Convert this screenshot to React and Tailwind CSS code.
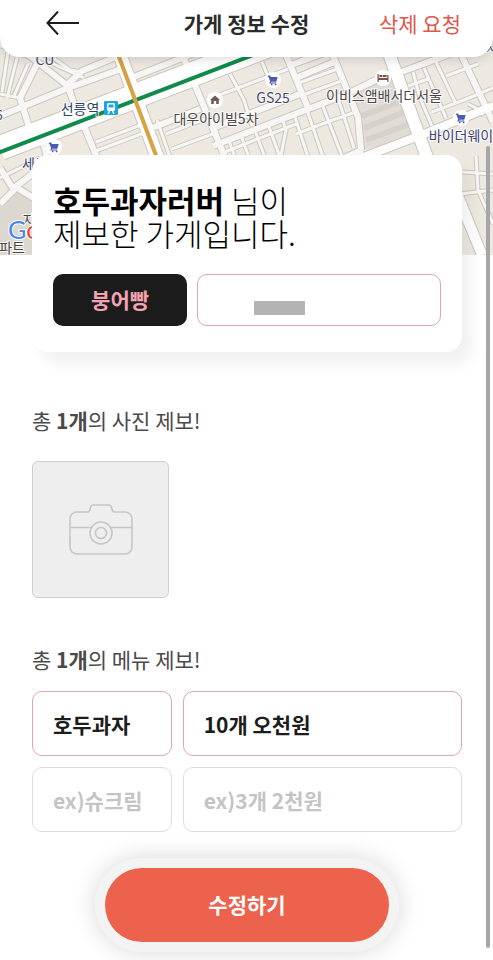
import { useState } from 'react';

// street centre lines, grouped by width
const narrowStreets = [
    'M7 98 L17 58',
    'M13 98 L28 64',
    'M2 92 L8 52',
    'M0 94 L20 98',
    'M52 57 L62 64 L70 70 L82 72',
    'M36 56 L84 78',
    'M157 120 L171 160',
    'M166 134 L210 117',
    'M172 149 L218 132',
    'M228 138 L236 160',
    'M240 133 L250 160',
    'M254 128 L266 160',
    'M268 124 L281 160',
    'M282 118 L286 130 L280 160',
    'M294 114 L309 160',
    'M307 110 L324 160',
    'M322 104 L342 156',
    'M338 98 L354 148',
    'M220 154 L250 142 L296 124',
    'M296 134 L330 121 L356 112',
    'M206 100 L238 88 L288 69',
    'M230 74 L244 100 L252 126',
    'M262 62 L272 86',
    'M296 84 L340 68',
    'M300 96 L344 80',
    'M413 72 L420 98 L432 126',
    'M424 68 L446 118',
    'M408 86 L428 79',
    'M436 62 L456 104',
    'M432 112 L464 100 L493 88',
    'M468 104 L476 108 L482 114 L484 108 L493 104',
    'M446 76 L478 64',
    'M96 142 L146 123',
    'M93 152 L152 130',
    'M0 178 L40 158',
    'M462 172 L493 174',
    'M460 194 L493 190',
    'M476 156 L478 190 L493 224',
];

const sideStreets = [
    'M0 44 L30 56 L68 86 L76 110',
    'M20 98 L38 62',
    'M20 98 L30 130',
    'M0 116 L68 88 L124 68',
    'M66 86 L82 71 L118 56',
    'M40 132 L48 160',
    'M84 126 L98 160',
    'M126 80 L182 58 L240 34',
    'M142 132 L200 109',
    'M182 54 L197 90 L227 162',
    'M284 50 L308 108',
    'M330 48 L347 90 L358 117 L361 150',
    'M213 128 L300 94',
    'M213 146 L347 94 L392 72',
    'M288 66 L388 30',
    'M296 78 L334 62',
    'M396 74 L493 38',
    'M362 150 L330 164',
    'M458 48 L474 82 L493 122',
    'M0 168 L14 190 L0 204',
    'M14 188 L40 168',
    'M14 186 L40 202',
];

const pins = [
    { x: 54, y: 147, kind: 'cart' },
    { x: 273, y: 80, kind: 'cart' },
    { x: 461, y: 118, kind: 'cart' },
    { x: 215, y: 100, kind: 'house' },
    { x: 383, y: 78, kind: 'bed' },
];

const labels = [
    { x: 45, y: 65, text: 'CU', color: '#45486b' },
    { x: 80, y: 114, text: '선릉역', color: '#2c4366' },
    { x: 216, y: 124, text: '대우아이빌5차', color: '#4b4444' },
    { x: 273, y: 103, text: 'GS25', color: '#45486b' },
    { x: 384, y: 101, text: '이비스앰배서더서울', color: '#4b4444' },
    { x: 461, y: 141, text: '바이더웨이', color: '#3e4175' },
    { x: 35, y: 169, text: '세븐', color: '#3e4175' },
    { x: 29, y: 225, text: '지', color: '#4b4444' },
    { x: 12, y: 253, text: '파트', color: '#4b4444' },
    { x: -1, y: 120, text: '6', color: '#45486b' },
    { x: 492, y: 53, text: '서', color: '#4b4444' },
];

const Pin = ({ x, y, kind }) => (
    <g transform={`translate(${x} ${y})`}>
        <circle r="8" fill="#fff" />
        {kind === 'cart' && (
            <g fill="#4d5ab0">
                <path d="M-5 -4.5 h2.2 l.6 1.6 h6.9 l-1.4 4.6 h-5.2 l-.3 .8 h5.4 v.9 h-6.900 l.8 -2.3 -1.700 -4.700 h-.9z" />
                <circle cx="-1.3" cy="4.4" r=".9" />
                <circle cx="2.6" cy="4.4" r=".9" />
            </g>
        )}
        {kind === 'house' && <path d="M0 -4.5 L5 0 H3.8 V4 H1.2 V1 H-1.2 V4 H-3.8 V0 H-5z" fill="#6f5a53" />}
        {kind === 'bed' && (
            <path d="M-5.5 -4 h1.2 v4 h8.6 v-3 h1.2 v7 h-1.2 v-2 h-8.6 v2 h-1.2z M-3.6 -3 h3 v2 h-3z M0 -3 h3.6 v2 h-3.6z" fill="#7d5148" />
        )}
    </g>
);

const StoreMap = () => (
    <svg
        viewBox="0 33 493 222"
        preserveAspectRatio="xMidYMin slice"
        className="block h-[222px] w-full font-['Noto_Sans_CJK_KR',sans-serif]"
        role="img"
        aria-label="가게 위치 지도"
    >
        <rect y="33" width="493" height="222" fill="#ede9e1" />
        <path d="M0 204 L14 190 L40 202 V255 H0z" fill="#dcd8d0" />
        <path d="M352 92 L392 72 L420 136 L362 150z" fill="#e1ddd6" />
        <path d="M362 116 L398 102 M364 128 L408 111 M366 140 L410 124" stroke="#d6d1cb" strokeWidth="6" />

        <g fill="none" stroke="#cbc7bf" strokeLinejoin="round">
            <g strokeWidth="5">{narrowStreets.map((d) => <path key={d} d={d} />)}</g>
            <g strokeWidth="8">{sideStreets.map((d) => <path key={d} d={d} />)}</g>
            <path d="M0 148 L300 33" strokeWidth="26" />
            <path d="M112 33 L160 165" strokeWidth="15" />
            <path d="M384 40 L428 160" strokeWidth="14" />
            <path d="M340 166 L424 134 L493 106" strokeWidth="10" />
            <path d="M458 196 L482 255" strokeWidth="12" />
        </g>
        <g fill="none" stroke="#f7f6f4" strokeLinejoin="round">
            <g strokeWidth="3">{narrowStreets.map((d) => <path key={d} d={d} />)}</g>
            <g strokeWidth="6">{sideStreets.map((d) => <path key={d} d={d} />)}</g>
            <path d="M0 148 L300 33" stroke="#fff" strokeWidth="24" />
            <path d="M112 33 L160 165" stroke="#fff" strokeWidth="13" />
            <path d="M384 40 L428 160" stroke="#fff" strokeWidth="12" />
            <path d="M340 166 L424 134 L493 106" stroke="#fdfdfc" strokeWidth="8" />
            <path d="M458 196 L482 255" stroke="#fff" strokeWidth="10" />
        </g>

        {/* subway lines */}
        <path d="M-2 153 L300 37" stroke="#118a4c" strokeWidth="4" />
        <path d="M110 33 L160 166" stroke="#d8a142" strokeWidth="4" />

        <g transform="translate(111 108)">
            <rect x="-7" y="-7" width="14" height="14" rx="1" fill="#1ba5e3" />
            <rect x="-4" y="-5" width="8" height="8" rx="1.5" fill="#fff" />
            <rect x="-2.5" y="-3.5" width="5" height="3" fill="#1ba5e3" />
            <path d="M-3 6 L-1.5 3 M3 6 L1.5 3" stroke="#fff" strokeWidth="1.4" />
        </g>

        {pins.map((pin) => <Pin key={`${pin.x}-${pin.y}`} {...pin} />)}

        {labels.map((label) => (
            <text
                key={label.text}
                x={label.x}
                y={label.y}
                textAnchor="middle"
                fontSize="14"
                fill={label.color}
                stroke="#fff"
                strokeOpacity="0.8"
                strokeWidth="2"
                paintOrder="stroke"
            >
                {label.text}
            </text>
        ))}

        <text x="8" y="239" fontSize="25" className="font-[Lato,sans-serif]" stroke="#fff" strokeWidth="2" paintOrder="stroke">
            <tspan fill="#4285f4">G</tspan>
            <tspan fill="#ea4335">o</tspan>
        </text>
    </svg>
);

const CameraIcon = () => (
    <svg width="64" height="52" viewBox="0 0 64 52" fill="none" stroke="#c6c6c6" strokeWidth="1.6" aria-hidden="true">
        <path d="M1 15 a7 7 0 0 1 7 -7 h10 q2.500 0 3 -2.500 l.6 -2.500 q.5 -2 2.500 -2 h15.800 q2 0 2.500 2 l.6 2.500 q.5 2.500 3 2.500 h10 a7 7 0 0 1 7 7 v28 a7 7 0 0 1 -7 7 h-48 a7 7 0 0 1 -7 -7 z" />
        <path d="M1 23.500 h21.500 M41.500 23.500 h21.500" />
        <circle cx="32" cy="29" r="11" />
        <circle cx="32" cy="29" r="5.500" />
    </svg>
);

const SectionTitle = ({ count, children }) => (
    <h2 className="text-[21px] leading-6 font-normal text-[#4a4a4a]">
        총 <strong className="font-bold">{count}개</strong>의 {children} 제보!
    </h2>
);

const MenuInput = ({ label, value, placeholder, onChange }) => (
    <input
        type="text"
        aria-label={label}
        value={value}
        placeholder={placeholder}
        onChange={(e) => onChange(e.target.value)}
        className="h-[65px] w-full min-w-0 rounded-[10px] border border-[#e3a3b1] bg-white px-5 text-[21px] font-bold text-[#1c1c1c] outline-none placeholder:text-[#c4c4c6] placeholder-shown:border-[#dcdcdc]"
    />
);

const App = () => {
    const [menus, setMenus] = useState([
        { name: '호두과자', price: '10개 오천원' },
        { name: '', price: '' },
    ]);

    const updateMenu = (index, field, value) => {
        setMenus(menus.map((menu, i) => (i === index ? { ...menu, [field]: value } : menu)));
    };

    return (
        <div className="relative min-h-screen bg-white font-['Noto_Sans_CJK_KR',sans-serif]">
            <header className="relative z-10 grid h-[57px] grid-cols-3 items-start rounded-b-[20px] bg-white px-8 pt-[11px] shadow-[0_2px_12px_rgba(0,0,0,0.15)]">
                <button type="button" aria-label="뒤로" className="justify-self-start pl-[14px]">
                    <svg width="34" height="24" viewBox="0 0 34 24" fill="none" stroke="#1c1c1c" strokeWidth="2" aria-hidden="true">
                        <path d="M33 12 H2 M12 0.500 L1.500 12 L12 23.500" />
                    </svg>
                </button>
                <h1 className="justify-self-center text-[21px] leading-6 font-bold whitespace-nowrap text-[#2b2b2b]">가게 정보 수정</h1>
                <button type="button" className="justify-self-end text-[21px] leading-6 whitespace-nowrap text-[#e2574c]">삭제 요청</button>
            </header>

            <div className="-mt-6">
                <StoreMap />
            </div>

            <main className="pr-[31px] pb-2 pl-8">
                <section className="relative -mt-[100px] rounded-2xl bg-white px-[21px] pt-7 pb-[26px] shadow-[10px_12px_14px_rgba(0,0,0,0.06)]">
                    <p className="text-[31px] leading-[33px] font-light text-black">
                        <strong className="font-bold">호두과자러버</strong> 님이
                        <br />
                        제보한 가게입니다.
                    </p>
                    <div className="mt-[25px] grid grid-cols-[11fr_20fr] gap-[10px]">
                        <button type="button" className="h-[52px] rounded-[10px] bg-[#1c1c1c] text-[21px] font-bold text-[#f3a3b1]">붕어빵</button>
                        <button type="button" aria-label="가게 이름" className="flex h-[52px] items-end rounded-[10px] border border-[#e3a3b1] bg-white pb-[10px] pl-14">
                            <span className="h-[14px] w-[51px] bg-[#b3b3b3]"></span>
                        </button>
                    </div>
                </section>

                <section className="mt-14">
                    <SectionTitle count={1}>사진</SectionTitle>
                    <button type="button" aria-label="사진 추가" className="mt-[29px] flex size-[137px] items-center justify-center rounded-md border border-[#cecece] bg-[#eeeeee]">
                        <CameraIcon />
                    </button>
                </section>

                <section className="mt-[49px]">
                    <SectionTitle count={1}>메뉴</SectionTitle>
                    <div className="mt-5 flex flex-col gap-[11px]">
                        {menus.map((menu, index) => (
                            <div key={index} className="grid grid-cols-[1fr_2fr] gap-[11px]">
                                <MenuInput
                                    label={`메뉴 ${index + 1} 이름`}
                                    value={menu.name}
                                    placeholder="ex)슈크림"
                                    onChange={(value) => updateMenu(index, 'name', value)}
                                />
                                <MenuInput
                                    label={`메뉴 ${index + 1} 가격`}
                                    value={menu.price}
                                    placeholder="ex)3개 2천원"
                                    onChange={(value) => updateMenu(index, 'price', value)}
                                />
                            </div>
                        ))}
                    </div>
                </section>

                <div className="mx-auto mt-[26px] w-full max-w-[304px] rounded-full bg-[#f3f3f3] p-[10px] shadow-[0_0_24px_rgba(0,0,0,0.16)]">
                    <button type="submit" className="h-[74px] w-full rounded-full bg-[#ed624d] text-[21px] font-bold text-white">수정하기</button>
                </div>
            </main>

            {/* scroll indicator */}
            <div className="absolute top-[146px] right-[3px] bottom-3 z-20 w-1 rounded-full bg-[#a6a6a6]"></div>
        </div>
    );
};

export default App;
